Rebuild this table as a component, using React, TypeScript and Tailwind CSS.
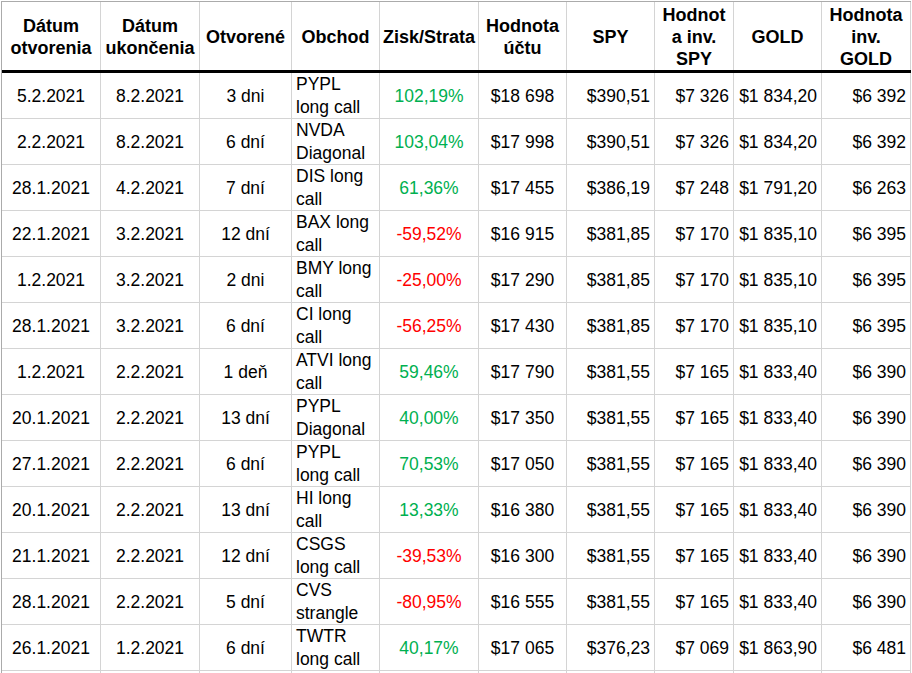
import React from 'react';

type Row = {
  open: string;
  close: string;
  days: string;
  trade: [string, string];
  pl: string;
  account: string;
  spy: string;
  spyInv: string;
  gold: string;
  goldInv: string;
};

const rows: Row[] = [
  { open: '5.2.2021', close: '8.2.2021', days: '3 dni', trade: ['PYPL', 'long call'], pl: '102,19%', account: '$18 698', spy: '$390,51', spyInv: '$7 326', gold: '$1 834,20', goldInv: '$6 392' },
  { open: '2.2.2021', close: '8.2.2021', days: '6 dní', trade: ['NVDA', 'Diagonal'], pl: '103,04%', account: '$17 998', spy: '$390,51', spyInv: '$7 326', gold: '$1 834,20', goldInv: '$6 392' },
  { open: '28.1.2021', close: '4.2.2021', days: '7 dní', trade: ['DIS long', 'call'], pl: '61,36%', account: '$17 455', spy: '$386,19', spyInv: '$7 248', gold: '$1 791,20', goldInv: '$6 263' },
  { open: '22.1.2021', close: '3.2.2021', days: '12 dní', trade: ['BAX long', 'call'], pl: '-59,52%', account: '$16 915', spy: '$381,85', spyInv: '$7 170', gold: '$1 835,10', goldInv: '$6 395' },
  { open: '1.2.2021', close: '3.2.2021', days: '2 dni', trade: ['BMY long', 'call'], pl: '-25,00%', account: '$17 290', spy: '$381,85', spyInv: '$7 170', gold: '$1 835,10', goldInv: '$6 395' },
  { open: '28.1.2021', close: '3.2.2021', days: '6 dní', trade: ['CI long', 'call'], pl: '-56,25%', account: '$17 430', spy: '$381,85', spyInv: '$7 170', gold: '$1 835,10', goldInv: '$6 395' },
  { open: '1.2.2021', close: '2.2.2021', days: '1 deň', trade: ['ATVI long', 'call'], pl: '59,46%', account: '$17 790', spy: '$381,55', spyInv: '$7 165', gold: '$1 833,40', goldInv: '$6 390' },
  { open: '20.1.2021', close: '2.2.2021', days: '13 dní', trade: ['PYPL', 'Diagonal'], pl: '40,00%', account: '$17 350', spy: '$381,55', spyInv: '$7 165', gold: '$1 833,40', goldInv: '$6 390' },
  { open: '27.1.2021', close: '2.2.2021', days: '6 dní', trade: ['PYPL', 'long call'], pl: '70,53%', account: '$17 050', spy: '$381,55', spyInv: '$7 165', gold: '$1 833,40', goldInv: '$6 390' },
  { open: '20.1.2021', close: '2.2.2021', days: '13 dní', trade: ['HI long', 'call'], pl: '13,33%', account: '$16 380', spy: '$381,55', spyInv: '$7 165', gold: '$1 833,40', goldInv: '$6 390' },
  { open: '21.1.2021', close: '2.2.2021', days: '12 dní', trade: ['CSGS', 'long call'], pl: '-39,53%', account: '$16 300', spy: '$381,55', spyInv: '$7 165', gold: '$1 833,40', goldInv: '$6 390' },
  { open: '28.1.2021', close: '2.2.2021', days: '5 dní', trade: ['CVS', 'strangle'], pl: '-80,95%', account: '$16 555', spy: '$381,55', spyInv: '$7 165', gold: '$1 833,40', goldInv: '$6 390' },
  { open: '26.1.2021', close: '1.2.2021', days: '6 dní', trade: ['TWTR', 'long call'], pl: '40,17%', account: '$17 065', spy: '$376,23', spyInv: '$7 069', gold: '$1 863,90', goldInv: '$6 481' },
];

const headers: string[][] = [
  ['Dátum', 'otvorenia'],
  ['Dátum', 'ukončenia'],
  ['Otvorené'],
  ['Obchod'],
  ['Zisk/Strata'],
  ['Hodnota', 'účtu'],
  ['SPY'],
  ['Hodnot', 'a inv.', 'SPY'],
  ['GOLD'],
  ['Hodnota', 'inv.', 'GOLD'],
];

const cols = 'grid grid-cols-[99px_99px_92px_88px_99px_88px_88px_79px_88px_89px]';
const cell = 'flex items-center border-r border-[#d4d4d4] whitespace-nowrap';

export default function App() {
  return (
    <div className="min-h-screen bg-white pl-px pt-px font-['Liberation_Sans',Arial,sans-serif] text-[17.5px] text-black">
      <div className="w-[910px] border-l border-t border-[#ababab]">
        {/* Hlavička */}
        <div className={`${cols} h-[71px] border-b-[3px] border-black`}>
          {headers.map((lines, i) => (
            <div
              key={i}
              className={`${cell} flex-col justify-center pt-px text-center text-[18px] font-bold leading-[22px]`}
            >
              {lines.map((l) => (
                <span key={l}>{l}</span>
              ))}
            </div>
          ))}
        </div>

        {/* Riadky */}
        {rows.map((r, i) => (
          <div key={i} className={`${cols} h-[46px] border-b border-[#d4d4d4] leading-[23px]`}>
            <div className={`${cell} justify-center pt-px`}>{r.open}</div>
            <div className={`${cell} justify-center pt-px`}>{r.close}</div>
            <div className={`${cell} justify-center pt-px`}>{r.days}</div>
            <div className={`${cell} flex-col items-start justify-center pl-1`}>
              <span>{r.trade[0]}</span>
              <span>{r.trade[1]}</span>
            </div>
            <div
              className={`${cell} justify-center pt-px ${r.pl.startsWith('-') ? 'text-[#ff0000]' : 'text-[#00b050]'}`}
            >
              {r.pl}
            </div>
            <div className={`${cell} justify-center pt-px`}>{r.account}</div>
            <div className={`${cell} justify-end pr-1 pt-px`}>{r.spy}</div>
            <div className={`${cell} justify-end pr-1 pt-px`}>{r.spyInv}</div>
            <div className={`${cell} justify-end pr-1 pt-px`}>{r.gold}</div>
            <div className={`${cell} justify-end pr-1 pt-px`}>{r.goldInv}</div>
          </div>
        ))}

        {/* Ďalší riadok (orezaný) */}
        <div className={`${cols} h-[20px]`}>
          {headers.map((_, i) => (
            <div key={i} className={cell} />
          ))}
        </div>
      </div>
    </div>
  );
}
